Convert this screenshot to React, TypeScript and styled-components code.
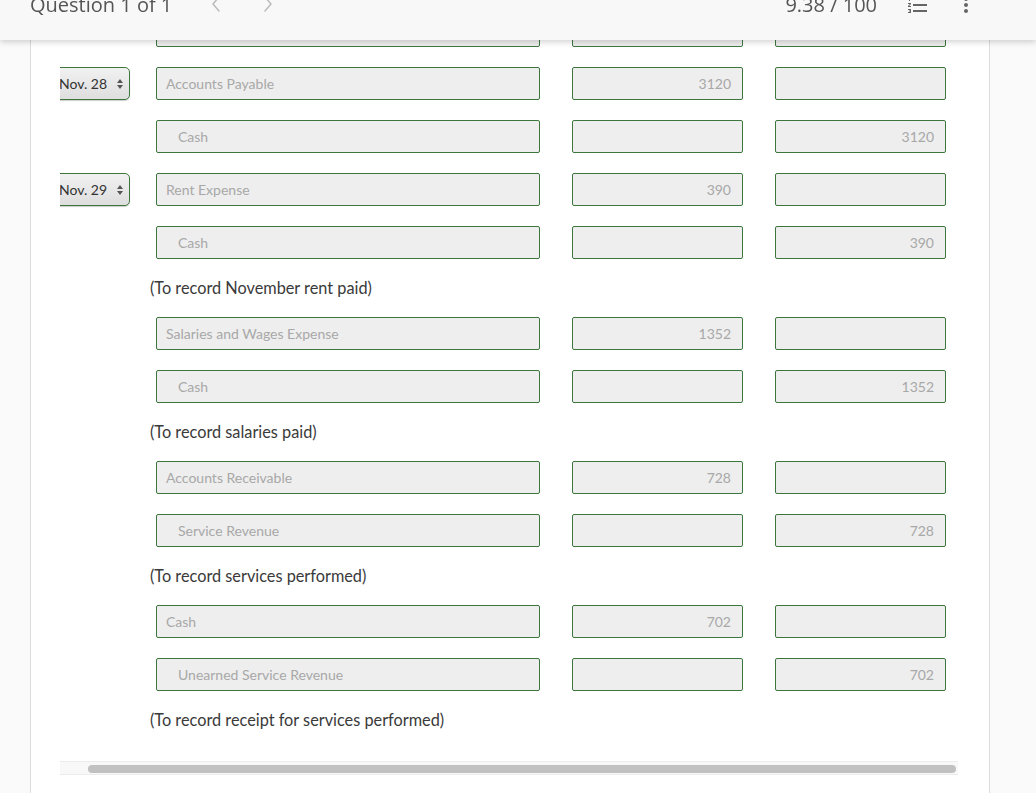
import React from "react";
import styled, { createGlobalStyle } from "styled-components";
import { MdFormatListNumbered, MdMoreVert } from "react-icons/md";

const GlobalStyle = createGlobalStyle`
  html, body { margin: 0; padding: 0; }
  body {
    background: #fafafa;
    font-family: Lato, "Open Sans", "Liberation Sans", sans-serif;
    overflow: hidden;
  }
  * { box-sizing: border-box; }
`;

const Header = styled.header`
  position: fixed;
  top: 0;
  left: 0;
  right: 0;
  height: 40px;
  background: #f8f8f8;
  box-shadow: 0 2px 6px rgba(0, 0, 0, 0.18);
  display: flex;
  align-items: flex-start;
  padding: 0 58px 0 30px;
  z-index: 10;
  overflow: hidden;
`;

const Title = styled.div`
  font-family: "Open Sans", "Liberation Sans", sans-serif;
  font-size: 20px;
  line-height: 24px;
  color: #555;
  margin-top: -7px;
  white-space: nowrap;
`;

const NavButton = styled.button<{ $first?: boolean }>`
  border: none;
  background: none;
  padding: 0;
  margin-left: ${(p) => (p.$first ? "37px" : "38px")};
  margin-top: -4px;
  width: 14px;
  height: 16px;
  display: flex;
  align-items: center;
  justify-content: center;
  color: #bbb;
`;

const Score = styled.div`
  margin-left: auto;
  font-family: "Open Sans", "Liberation Sans", sans-serif;
  font-size: 20px;
  line-height: 24px;
  color: #555;
  margin-top: -7px;
  white-space: nowrap;
`;

const IconButton = styled.button<{ $gap: number }>`
  border: none;
  background: none;
  padding: 0;
  margin-left: ${(p) => p.$gap}px;
  margin-top: -7px;
  width: 24px;
  height: 24px;
  color: #666;
  display: flex;
`;

const Panel = styled.main`
  margin-left: 30px;
  width: 960px;
  min-height: 793px;
  background: #fff;
  border-left: 1px solid #ddd;
  border-right: 1px solid #ddd;
`;

const ScrollArea = styled.div`
  margin-left: 29px;
  width: 898px;
  overflow: hidden;
`;

const Content = styled.div`
  margin-left: -29px;
  width: 929px;
  padding: 14px 0 12px 21px;
`;

const Row = styled.div`
  display: flex;
  height: 33px;
  margin-bottom: 20px;
`;

const DateSlot = styled.div`
  width: 104px;
  flex: none;
`;

const DateSelect = styled.div`
  width: 78px;
  height: 33px;
  border: 1px solid #3c763d;
  border-radius: 5px;
  background: linear-gradient(#f1f1f1, #dedede);
  box-shadow: 0 1px 1px rgba(0, 0, 0, 0.2);
  display: flex;
  align-items: center;
  justify-content: space-between;
  padding: 0 5px 0 6px;
  font-size: 14px;
  color: #333;
`;

const Field = styled.input<{ $width: number; $indent?: boolean; $right?: boolean }>`
  width: ${(p) => p.$width}px;
  flex: none;
  height: 33px;
  margin: 0;
  margin-left: ${(p) => (p.$width === 384 ? 0 : 32)}px;
  border: 1px solid #3c763d;
  border-radius: 2px;
  background: #eeeeee;
  font-family: Lato, "Liberation Sans", sans-serif;
  font-size: 14px;
  color: #a8a8a8;
  text-align: ${(p) => (p.$right ? "right" : "left")};
  padding: 0 ${(p) => (p.$right ? 11 : 0)}px 0 ${(p) => (p.$indent ? 21 : 9)}px;
  outline: none;
`;

const Memo = styled.div`
  margin-left: 98px;
  font-size: 16.3px;
  line-height: 18px;
  color: #3a3a3a;
  margin-bottom: 20px;
`;

const Track = styled.div`
  margin-left: 29px;
  width: 898px;
  height: 14px;
  background: #f8f8f8;
  border-top: 1px solid #ececec;
  border-bottom: 1px solid #ececec;
  padding-top: 3px;
`;

const Thumb = styled.div`
  margin-left: 28px;
  width: 868px;
  height: 8px;
  border-radius: 4px;
  background: #c1c1c1;
`;

const Chevron = ({ dir }: { dir: "left" | "right" }) => (
  <svg width="10" height="16" viewBox="0 0 10 16" fill="none">
    <polyline
      points={dir === "left" ? "8,1 2,8 8,15" : "2,1 8,8 2,15"}
      stroke="currentColor"
      strokeWidth="1.5"
      strokeLinecap="round"
      strokeLinejoin="round"
    />
  </svg>
);

const Arrows = () => (
  <svg width="8" height="12" viewBox="0 0 8 12">
    <polygon points="4,1 7,5 1,5" fill="#555" />
    <polygon points="1,7 7,7 4,11" fill="#555" />
  </svg>
);

type Entry =
  | { kind: "row"; date?: string; account: string; debit?: string; credit?: string; indent?: boolean }
  | { kind: "memo"; text: string };

const entries: Entry[] = [
  { kind: "row", account: "", indent: true },
  { kind: "row", date: "Nov. 28", account: "Accounts Payable", debit: "3120" },
  { kind: "row", account: "Cash", credit: "3120", indent: true },
  { kind: "row", date: "Nov. 29", account: "Rent Expense", debit: "390" },
  { kind: "row", account: "Cash", credit: "390", indent: true },
  { kind: "memo", text: "(To record November rent paid)" },
  { kind: "row", account: "Salaries and Wages Expense", debit: "1352" },
  { kind: "row", account: "Cash", credit: "1352", indent: true },
  { kind: "memo", text: "(To record salaries paid)" },
  { kind: "row", account: "Accounts Receivable", debit: "728" },
  { kind: "row", account: "Service Revenue", credit: "728", indent: true },
  { kind: "memo", text: "(To record services performed)" },
  { kind: "row", account: "Cash", debit: "702" },
  { kind: "row", account: "Unearned Service Revenue", credit: "702", indent: true },
  { kind: "memo", text: "(To record receipt for services performed)" },
];

export default function App() {
  return (
    <>
      <GlobalStyle />
      <Header>
        <Title>Question 1 of 1</Title>
        <NavButton $first aria-label="Previous">
          <Chevron dir="left" />
        </NavButton>
        <NavButton aria-label="Next">
          <Chevron dir="right" />
        </NavButton>
        <Score>9.38 / 100</Score>
        <IconButton $gap={29} aria-label="Questions">
          <MdFormatListNumbered size={24} />
        </IconButton>
        <IconButton $gap={24} aria-label="More">
          <MdMoreVert size={24} />
        </IconButton>
      </Header>
      <Panel>
        <ScrollArea>
          <Content>
            {entries.map((e, i) =>
              e.kind === "memo" ? (
                <Memo key={i}>{e.text}</Memo>
              ) : (
                <Row key={i}>
                  <DateSlot>
                    {e.date && (
                      <DateSelect>
                        <span>{e.date}</span>
                        <Arrows />
                      </DateSelect>
                    )}
                  </DateSlot>
                  <Field $width={384} $indent={e.indent} readOnly value={e.account} />
                  <Field $width={171} $right readOnly value={e.debit ?? ""} />
                  <Field $width={171} $right readOnly value={e.credit ?? ""} />
                </Row>
              )
            )}
          </Content>
        </ScrollArea>
        <Track>
          <Thumb />
        </Track>
      </Panel>
    </>
  );
}
